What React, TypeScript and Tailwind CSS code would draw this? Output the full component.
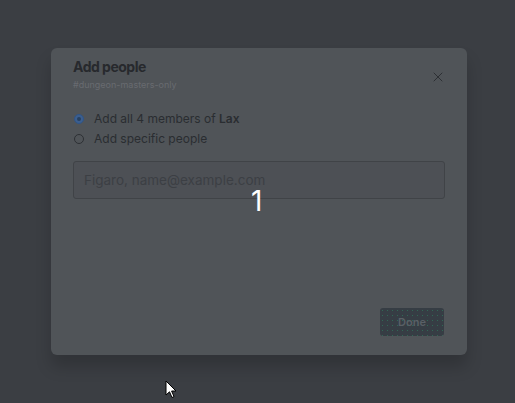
import { X } from 'lucide-react'

function Cursor() {
  return (
    <svg width="12" height="19" viewBox="0 0 12 19" className="absolute left-[165px] top-[380px]">
      <path d="M1 1 L1 15 L4.5 11.8 L7 17.5 L9 16.6 L6.6 11 L11 11 Z" fill="#fff" stroke="#000" strokeWidth="1" />
    </svg>
  )
}

export default function App() {
  return (
    <div className="relative w-[515px] h-[403px] bg-[#3b3e43] overflow-hidden" style={{ fontFamily: 'Inter, "Noto Sans", sans-serif' }}>
      <div className="pt-[48px] pl-[51px]">
        <div className="w-[416px] h-[307px] rounded-[6px] bg-[#505458] shadow-[0_12px_16px_rgba(0,0,0,0.18)] flex flex-col px-[22px] pt-[10px] pb-[19px]">
          <div className="flex items-start justify-between">
            <div className="flex flex-col">
              <span className="text-[14px] font-bold tracking-[-0.5px] text-[#27292d] leading-[18px]">Add people</span>
              <span className="text-[9px] text-[#686b70] leading-[12px] mt-[3px]">#dungeon-masters-only</span>
            </div>
            <X size={16} strokeWidth={1.5} className="text-[#2d3034] mt-[11px] -mr-[1px]" />
          </div>
          <div className="flex flex-col gap-[5px] mt-[20px]">
            <div className="flex items-center gap-[10px] text-[12px] text-[#2a2d31] leading-[15px]">
              <span className="w-[10px] h-[10px] rounded-full border border-[#2f5487] bg-[#3c5f8f] flex items-center justify-center ml-[1px]">
                <span className="w-[4px] h-[4px] rounded-full bg-[#27405f]" />
              </span>
              <span>Add all 4 members of <b className="font-semibold">Lax</b></span>
            </div>
            <div className="flex items-center gap-[10px] text-[12px] text-[#2a2d31] leading-[15px]">
              <span className="w-[10px] h-[10px] rounded-full border border-[#2d3034] ml-[1px]" />
              <span>Add specific people</span>
            </div>
          </div>
          <div className="mt-[15px] h-[38px] rounded-[3px] border border-[#404347] bg-[#4d5055] flex items-center px-[10px]">
            <span className="text-[13.5px] text-[#3c3f44]">Figaro, name@example.com</span>
          </div>
          <div className="flex-1" />
          <div className="flex justify-end">
            <button className="w-[64px] h-[28px] rounded-[3px] bg-[#363d44] bg-[radial-gradient(rgba(47,140,100,0.55)_0.5px,transparent_0.9px)] bg-[length:5px_5px] text-[11px] font-semibold text-[#596066] mr-[1px]">Done</button>
          </div>
        </div>
      </div>
      <span className="absolute left-[251px] top-[185px] text-[28px] leading-[32px] text-white">1</span>
      <Cursor />
    </div>
  )
}
